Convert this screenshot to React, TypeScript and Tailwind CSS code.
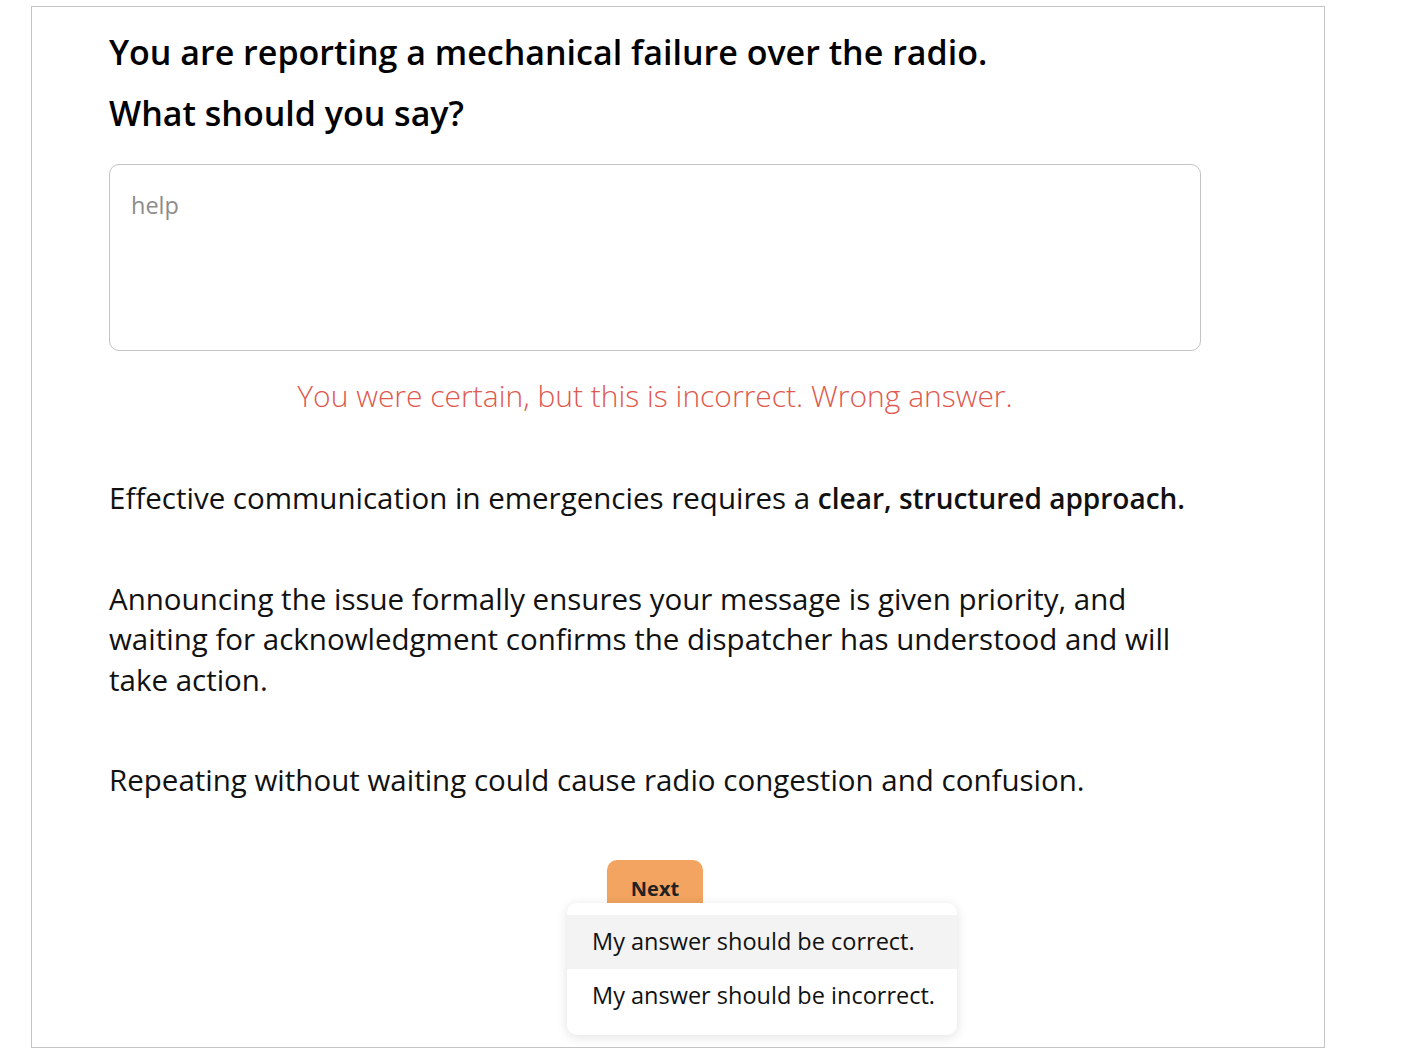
import React from 'react';

const font = { fontFamily: '"Open Sans", Lato, sans-serif' };

export default function App() {
    return (
        <div className="bg-white min-h-[1053px] w-full" style={font}>
            <div className="ml-[31px] mt-[6px] w-[1294px] h-[1042px] border border-[#c4c4c4] relative">
                <div className="ml-[77px] w-[1092px] pt-[23px] text-black">
                    <h1 className="text-[34px] leading-[44px] font-semibold">You are reporting a mechanical failure over the radio.</h1>
                    <h2 className="text-[34px] leading-[44px] font-semibold mt-[17px]">What should you say?</h2>

                    <div className="mt-[29px] h-[187px] border border-[#c4c4c4] rounded-[10px] px-[21px] pt-[23px]">
                        <span className="text-[23.5px] text-[#8c8c8c]">help</span>
                    </div>

                    <p className="mt-[25px] text-center text-[30px] leading-[40px] text-[#e0584e] font-light">
                        You were certain, but this is incorrect. Wrong answer.
                    </p>

                    <div className="text-[29.5px] leading-[40.5px] text-[#111]">
                        <p className="mt-[62px]">
                            Effective communication in emergencies requires a <span className="font-semibold text-[28px]">clear, structured approach.</span>
                        </p>
                        <p className="mt-[60px]">
                            Announcing the issue formally ensures your message is given priority, and waiting for acknowledgment confirms the dispatcher has understood and will take action.
                        </p>
                        <p className="mt-[60px]">
                            Repeating without waiting could cause radio congestion and confusion.
                        </p>
                    </div>

                    <div className="mt-[59px] flex justify-center">
                        <button className="w-[96px] h-[58px] bg-[#f2a460] rounded-[10px] text-[20px] font-bold text-[#222] leading-none flex items-center justify-center">
                            Next
                        </button>
                    </div>
                </div>

                <div className="absolute left-[535px] top-[896px] w-[390px] bg-white rounded-[10px] shadow-[0_2px_12px_rgba(0,0,0,0.12)] py-[12px]">
                    <div className="h-[54px] bg-[#f3f3f3] pl-[25px] pr-[10px] flex items-center whitespace-nowrap text-[23.5px] text-[#111]">My answer should be correct.</div>
                    <div className="h-[54px] pl-[25px] pr-[10px] flex items-center whitespace-nowrap text-[23.5px] text-[#111]">My answer should be incorrect.</div>
                </div>
            </div>
        </div>
    );
}
